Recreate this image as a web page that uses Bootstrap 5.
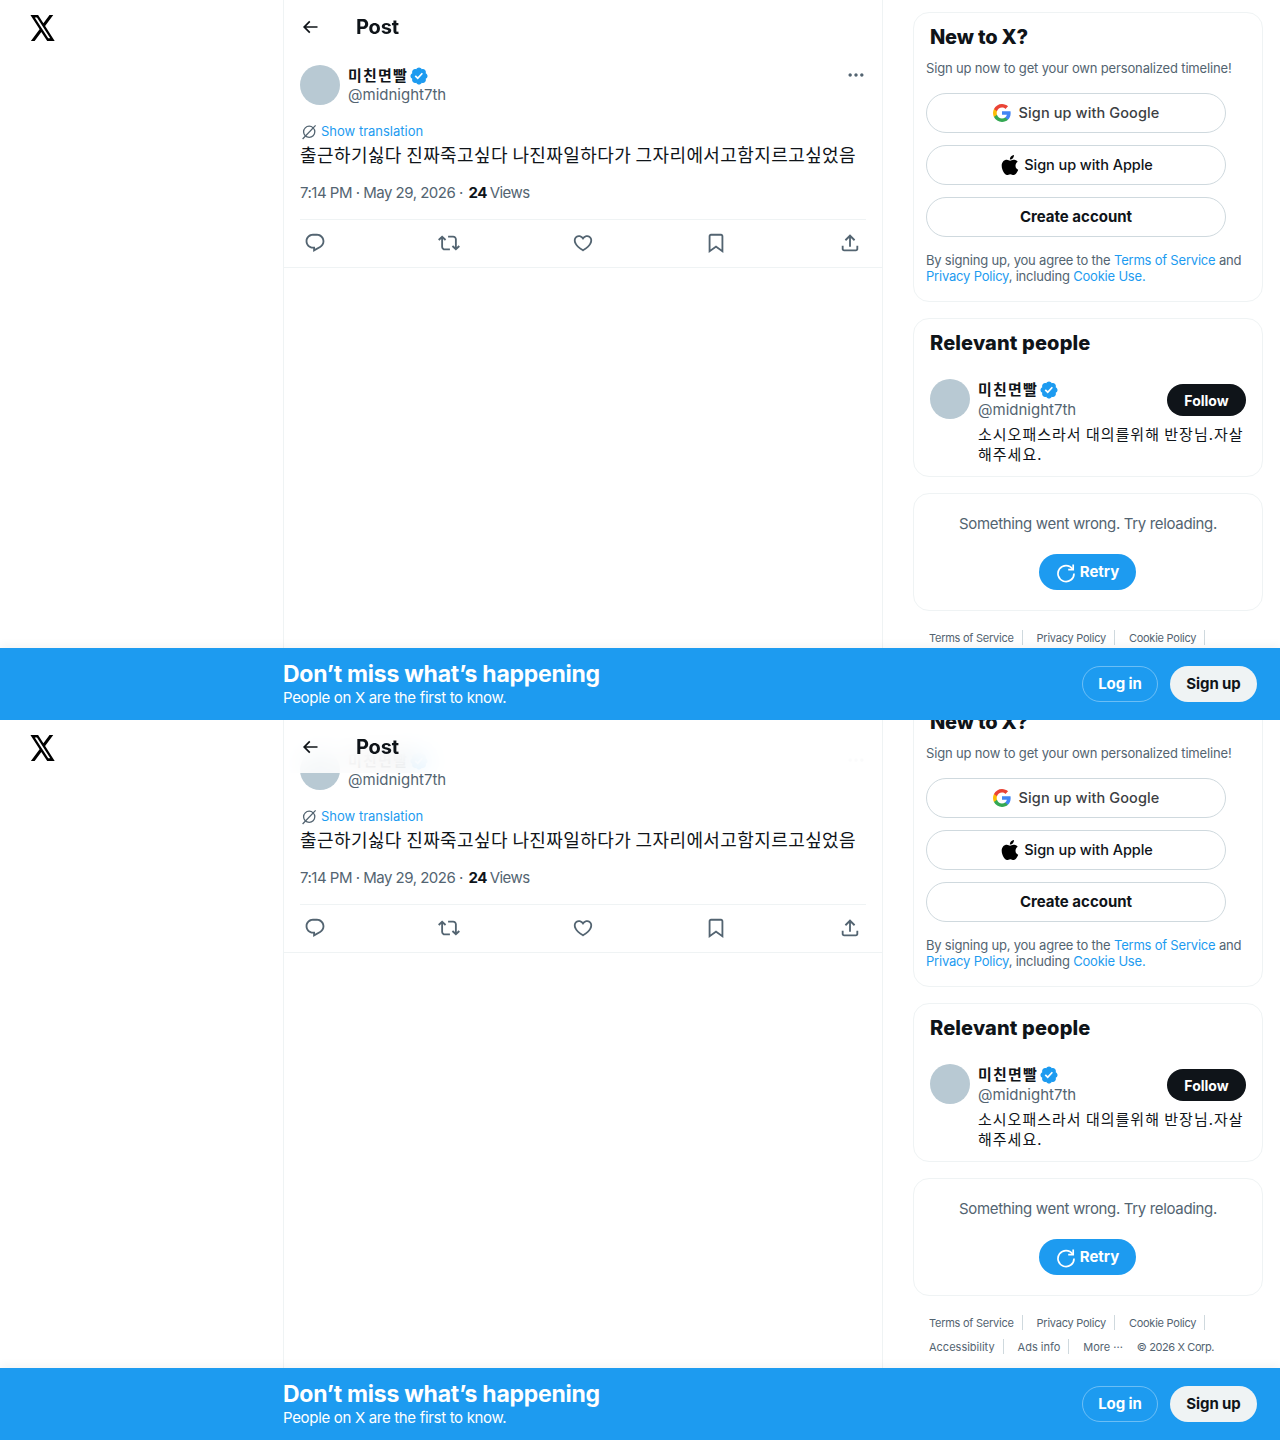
<!DOCTYPE html>
<html lang="en">
<head>
    <meta charset="UTF-8">
    <meta name="viewport" content="width=device-width, initial-scale=1.0">
    <link href="https://cdn.jsdelivr.net/npm/bootstrap@5.3.0/dist/css/bootstrap.min.css" rel="stylesheet">
    <title>Post / X</title>
    <style>
        body { font-family: Inter, "Noto Sans CJK KR", sans-serif; color: #0f1419; background: #fff; }
        .ko { font-family: "Noto Sans CJK KR", sans-serif; }
        .shot { height: 720px; }
        .left-rail { width: 283px; flex: none; padding: 15px 0 0 28.5px; }
        .left-rail svg { width: 27px; height: 32px; margin-top: -3px; display: block; }
        .center-col { width: 600px; flex: none; border-left: 1px solid #eff3f4; border-right: 1px solid #eff3f4; }
        .post-head { top: 0; left: 0; right: 0; height: 53px; padding-left: 16px; background: rgba(255,255,255,.85); backdrop-filter: blur(12px); z-index: 2; }
        .post-head h2 { font-size: 20px; font-weight: 700; letter-spacing: -.2px; margin: 0 0 0 36px; }
        .post-head svg { width: 20px; height: 20px; fill: #0f1419; }
        .post-wrap { padding-top: 53px; }
        .scrolled { margin-top: -35px; }
        .post-body { padding: 12px 16px 0; border-bottom: 1px solid #eff3f4; height: 215px; }
        .post-body .handle { margin-top: -1px; }
        .avatar-dot { width: 40px; height: 40px; border-radius: 50%; background: #b8c9d3; flex: none; }
        .user-name { font-size: 15px; font-weight: 700; line-height: 20px; letter-spacing: 1.2px; }
        .user-name svg { width: 20px; height: 20px; fill: #1d9bf0; vertical-align: -5px; margin-left: 1px; }
        .handle { font-size: 15px; line-height: 20px; color: #536471; }
        .more-dots { width: 20px; height: 20px; fill: #536471; margin: 0 0 0 auto; }
        .translate-row { margin-top: 17px; height: 20px; font-size: 13px; color: #1d9bf0; }
        .translate-row svg { width: 16px; height: 16px; margin-left: 1px; margin-right: 4px; }
        .post-text { font-size: 18px; line-height: 24px; margin-top: 0; white-space: nowrap; letter-spacing: .4px; }
        .post-meta { font-size: 15px; line-height: 20px; color: #536471; margin-top: 17px; letter-spacing: -.5px; }
        .post-meta b { color: #0f1419; font-weight: 700; margin-left: 2px; margin-right: -1px; }
        .action-row { margin-top: 16px; border-top: 1px solid #eff3f4; height: 47px; }
        .action-row span { width: 32px; display: flex; justify-content: center; }
        .action-row span:first-child { margin-left: -1px; }
        .action-row svg { width: 22px; height: 22px; fill: #536471; }
        .side-col { width: 350px; flex: none; margin-left: 30px; padding-top: 12px; }
        .side-box { border: 1px solid #eff3f4; border-radius: 16px; margin-bottom: 16px; }
        .side-box h3 { font-size: 20px; font-weight: 800; line-height: 24px; margin: 0; letter-spacing: -.2px; }
        .signup-box { height: 290px; padding: 12px; }
        .signup-box h3 { padding-left: 4px; }
        .signup-note { font-size: 13px; line-height: 16px; color: #536471; margin: 11px 0 17px; white-space: nowrap; letter-spacing: -.16px; }
        .signup-btn { width: 300px; height: 40px; border: 1px solid #cfd9de; font-size: 14.5px; font-weight: 500; color: #0f1419; margin-bottom: 12px; padding: 0; }
        .signup-btn svg { width: 18px; height: 18px; }
        .google-btn { letter-spacing: .1px; color: #3c4043; }
        .apple-btn { gap: 3px; letter-spacing: -.07px; }
        .signup-btn.apple-btn svg { width: 22px; height: 22px; }
        .signup-btn.bold-btn { font-size: 15px; font-weight: 700; }
        .fine-print { font-size: 13px; line-height: 16px; color: #536471; margin-top: 3px; letter-spacing: -.2px; }
        .fine-print a, .foot-links a { text-decoration: none; }
        .fine-print a { color: #1d9bf0; }
        .people-box { height: 159px; padding: 12px 16px; }
        .side-box.people-box h3 { letter-spacing: .13px; }
        .people-row { margin-top: 24px; }
        .person-text { margin-left: 8px; flex: 1; min-width: 0; }
        .follow-btn { height: 32px; width: 79px; background: #0f1419; color: #fff; font-size: 14px; font-weight: 700; padding: 0; border: 0; margin-top: 5px; }
        .bio { font-size: 15px; line-height: 20px; margin-top: 4px; letter-spacing: 1px; }
        .wrong-box { height: 118px; padding-top: 20px; text-align: center; }
        .wrong-box p { font-size: 15px; line-height: 20px; color: #536471; margin: 0 0 20px; letter-spacing: -.34px; }
        .retry-btn { height: 36px; width: 97px; background: #1d9bf0; color: #fff; font-size: 15px; font-weight: 700; border: 0; padding: 0; margin-left: -1px; }
        .retry-btn svg { width: 20px; height: 20px; margin-right: 4px; }
        .foot-links { font-size: 11px; line-height: 16px; color: #536471; padding: 3px 16px 0; }
        .foot-links div { margin-bottom: 8px; display: flex; height: 16px; letter-spacing: -.25px; }
        .foot-links div + div { letter-spacing: 0; }
        .foot-links span { margin-right: 14px; padding-right: 8px; border-right: 1px solid #cfd9de; height: 15px; line-height: 16px; }
        .foot-links span.no-bar { border: 0; padding-right: 0; }
        .foot-links span.copy-note { letter-spacing: -.4px; }
        .login-bar { left: 0; right: 0; bottom: 0; height: 72px; background: #1d9bf0; color: #fff; padding: 0 23px 0 283px; z-index: 3; box-shadow: 0 -4px 8px rgba(0,0,0,.04); }
        .login-bar h4 { font-size: 23px; font-weight: 700; line-height: 26px; margin: 0 0 2px; letter-spacing: -.25px; }
        .login-bar p { font-size: 15px; line-height: 18px; margin: 0; letter-spacing: -.32px; }
        .bar-btn { height: 36px; font-size: 15px; font-weight: 700; padding: 0; letter-spacing: -.1px; }
        .bar-login { width: 76px; border: 1px solid rgba(255,255,255,.35); color: #fff; margin-right: 12px; }
        .bar-signup { width: 87px; border: 0; background: #eff3f4; color: #0f1419; }
    </style>
</head>
<body>
    <svg width="0" height="0" class="position-absolute">
        <symbol id="i-x" viewBox="0 0 24 24" preserveAspectRatio="none"><path d="M18.244 2.25h3.308l-7.227 8.26 8.502 11.24H16.17l-5.214-6.817L4.99 21.75H1.68l7.73-8.835L1.254 2.25H8.08l4.713 6.231zm-1.161 17.52h1.833L7.084 4.126H5.117z"/></symbol>
        <symbol id="i-back" viewBox="0 0 24 24"><path d="M7.414 13l5.043 5.04-1.414 1.42L3.586 12l7.457-7.46 1.414 1.42L7.414 11H21v2H7.414z"/></symbol>
        <symbol id="i-badge" viewBox="0 0 24 24"><path d="M22.25 12c0-1.43-.88-2.67-2.19-3.34.46-1.39.2-2.9-.81-3.91s-2.52-1.27-3.91-.81c-.66-1.31-1.91-2.19-3.34-2.19s-2.67.88-3.33 2.19c-1.4-.46-2.91-.2-3.92.81s-1.26 2.52-.8 3.91c-1.31.67-2.2 1.91-2.2 3.34s.89 2.67 2.2 3.34c-.46 1.39-.21 2.9.8 3.91s2.52 1.26 3.91.81c.67 1.31 1.91 2.19 3.34 2.19s2.68-.88 3.34-2.19c1.39.45 2.9.2 3.91-.81s1.27-2.52.81-3.91c1.31-.67 2.19-1.91 2.19-3.34zm-11.71 4.2L6.8 12.46l1.41-1.42 2.26 2.26 4.8-5.23 1.47 1.36-6.2 6.77z"/></symbol>
        <symbol id="i-more" viewBox="0 0 24 24"><path d="M3 12c0-1.1.9-2 2-2s2 .9 2 2-.9 2-2 2-2-.9-2-2zm9 2c1.1 0 2-.9 2-2s-.9-2-2-2-2 .9-2 2 .9 2 2 2zm7 0c1.1 0 2-.9 2-2s-.9-2-2-2-2 .9-2 2 .9 2 2 2z"/></symbol>
        <symbol id="i-translate" viewBox="0 0 16 16"><circle cx="8.2" cy="7.8" r="5.6" fill="none" stroke="#536471" stroke-width="1.3"/><path d="M1.6 15 14.6 1.4" fill="none" stroke="#536471" stroke-width="1.3"/></symbol>
        <symbol id="i-reply" viewBox="0 0 24 24"><path d="M1.751 10c0-4.42 3.584-8 8.005-8h4.366c4.49 0 8.129 3.64 8.129 8.13 0 2.96-1.607 5.68-4.196 7.11l-8.054 4.46v-3.69h-.067c-4.49.1-8.183-3.51-8.183-8.01zm8.005-6c-3.317 0-6.005 2.69-6.005 6 0 3.37 2.77 6.08 6.138 6.01l.351-.01h1.761v2.3l5.087-2.81c1.951-1.08 3.163-3.13 3.163-5.36 0-3.39-2.744-6.13-6.129-6.13H9.756z"/></symbol>
        <symbol id="i-repost" viewBox="0 0 24 24"><path d="M4.5 3.88l4.432 4.14-1.364 1.46L5.5 7.55V16c0 1.1.896 2 2 2H13v2H7.5c-2.209 0-4-1.79-4-4V7.55L1.432 9.48.068 8.02 4.5 3.88zM16.5 6H11V4h5.5c2.209 0 4 1.79 4 4v8.45l2.068-1.93 1.364 1.46-4.432 4.14-4.432-4.14 1.364-1.46 2.068 1.93V8c0-1.1-.896-2-2-2z"/></symbol>
        <symbol id="i-like" viewBox="0 0 24 24"><path d="M16.697 5.5c-1.222-.06-2.679.51-3.89 2.16l-.805 1.09-.806-1.09C9.984 6.01 8.526 5.44 7.304 5.5c-1.243.07-2.349.78-2.91 1.91-.552 1.12-.633 2.78.479 4.82 1.074 1.97 3.257 4.27 7.129 6.61 3.87-2.34 6.052-4.64 7.126-6.61 1.111-2.04 1.03-3.7.477-4.82-.561-1.13-1.666-1.84-2.908-1.91zm4.187 7.69c-1.351 2.48-4.001 5.12-8.379 7.67l-.503.3-.504-.3c-4.379-2.55-7.029-5.19-8.382-7.67-1.36-2.5-1.41-4.86-.514-6.67.887-1.79 2.647-2.91 4.601-3.01 1.651-.09 3.368.56 4.798 2.01 1.429-1.45 3.146-2.1 4.796-2.01 1.954.1 3.714 1.22 4.601 3.01.896 1.81.846 4.17-.514 6.67z"/></symbol>
        <symbol id="i-bookmark" viewBox="0 0 24 24"><path d="M4 4.5C4 3.12 5.119 2 6.5 2h11C18.881 2 20 3.12 20 4.5v18.44l-8-5.71-8 5.71V4.5zM6.5 4c-.276 0-.5.22-.5.5v14.56l6-4.29 6 4.29V4.5c0-.28-.224-.5-.5-.5h-11z"/></symbol>
        <symbol id="i-share" viewBox="0 0 24 24"><path d="M12 2.59l5.7 5.7-1.41 1.42L13 6.41V16h-2V6.41l-3.3 3.3-1.41-1.42L12 2.59zM21 15l-.02 3.51c0 1.38-1.12 2.49-2.5 2.49H5.5C4.11 21 3 19.88 3 18.5V15h2v3.5c0 .28.22.5.5.5h12.98c.28 0 .5-.22.5-.5L19 15h2z"/></symbol>
        <symbol id="i-google" viewBox="0 0 18 18"><path fill="#4285F4" d="M17.64 9.2c0-.637-.057-1.251-.164-1.84H9v3.481h4.844c-.209 1.125-.843 2.078-1.796 2.717v2.258h2.908c1.702-1.567 2.684-3.874 2.684-6.615z"/><path fill="#34A853" d="M9 18c2.43 0 4.467-.806 5.956-2.184l-2.908-2.258c-.806.54-1.837.86-3.048.86-2.344 0-4.328-1.584-5.036-3.711H.957v2.332C2.438 15.983 5.482 18 9 18z"/><path fill="#FBBC05" d="M3.964 10.707c-.18-.54-.282-1.117-.282-1.707s.102-1.167.282-1.707V4.961H.957C.347 6.175 0 7.55 0 9s.348 2.825.957 4.039l3.007-2.332z"/><path fill="#EA4335" d="M9 3.58c1.321 0 2.508.454 3.44 1.345l2.582-2.58C13.463.891 11.426 0 9 0 5.482 0 2.438 2.017.957 4.961L3.964 7.293C4.672 5.166 6.656 3.58 9 3.58z"/></symbol>
        <symbol id="i-apple" viewBox="0 0 24 24"><path d="M16.365 1.43c0 1.14-.493 2.27-1.177 3.08-.744.9-1.99 1.57-2.987 1.57-.12 0-.23-.02-.3-.03-.01-.06-.04-.22-.04-.39 0-1.15.572-2.27 1.206-2.98.804-.94 2.142-1.64 3.248-1.68.03.13.05.28.05.43zm4.565 15.71c-.03.07-.463 1.58-1.518 3.12-.945 1.34-1.94 2.71-3.43 2.71-1.517 0-1.9-.88-3.63-.88-1.698 0-2.302.91-3.67.91-1.377 0-2.332-1.26-3.428-2.8-1.287-1.82-2.323-4.63-2.323-7.28 0-4.28 2.797-6.55 5.552-6.55 1.448 0 2.675.95 3.6.95.865 0 2.222-1.01 3.902-1.01.613 0 2.886.06 4.374 2.19-.13.09-2.383 1.37-2.383 4.19 0 3.26 2.854 4.42 2.955 4.45z"/></symbol>
        <symbol id="i-retry" viewBox="0 0 20 20"><path d="M16.6 6.1A8 8 0 1 0 18 10.5" fill="none" stroke="#fff" stroke-width="1.7"/><path d="M17.2 1.6v5h-5" fill="none" stroke="#fff" stroke-width="1.7"/></symbol>
    </svg>

    <!-- first capture, top of the page -->
    <section class="shot d-flex position-relative overflow-hidden">
        <div class="left-rail"><svg><use href="#i-x"/></svg></div>
        <main class="center-col position-relative">
            <div class="post-head position-absolute d-flex align-items-center">
                <svg><use href="#i-back"/></svg><h2>Post</h2>
            </div>
            <div class="post-wrap">
                <div class="post-body">
                    <div class="d-flex">
                        <div class="avatar-dot me-2"></div>
                        <div class="flex-grow-1">
                            <div class="user-name ko">미친면빨<svg><use href="#i-badge"/></svg></div>
                            <div class="handle">@midnight7th</div>
                        </div>
                        <svg class="more-dots"><use href="#i-more"/></svg>
                    </div>
                    <div class="translate-row d-flex align-items-center"><svg><use href="#i-translate"/></svg>Show translation</div>
                    <div class="post-text ko">출근하기싫다 진짜죽고싶다 나진짜일하다가 그자리에서고함지르고싶었음</div>
                    <div class="post-meta">7:14 PM · May 29, 2026 · <b>24</b> Views</div>
                    <div class="action-row d-flex justify-content-between align-items-center">
                        <span><svg><use href="#i-reply"/></svg></span>
                        <span><svg><use href="#i-repost"/></svg></span>
                        <span><svg><use href="#i-like"/></svg></span>
                        <span><svg><use href="#i-bookmark"/></svg></span>
                        <span><svg><use href="#i-share"/></svg></span>
                    </div>
                </div>
            </div>
        </main>
        <aside class="side-col">
            <div class="side-box signup-box">
                <h3>New to X?</h3>
                <p class="signup-note">Sign up now to get your own personalized timeline!</p>
                <button class="btn signup-btn google-btn rounded-pill d-flex align-items-center justify-content-center gap-2"><svg><use href="#i-google"/></svg>Sign up with Google</button>
                <button class="btn signup-btn apple-btn rounded-pill d-flex align-items-center justify-content-center"><svg><use href="#i-apple"/></svg>Sign up with Apple</button>
                <button class="btn signup-btn bold-btn rounded-pill">Create account</button>
                <p class="fine-print mb-0">By signing up, you agree to the <a href="#">Terms of Service</a> and <a href="#">Privacy Policy</a>, including <a href="#">Cookie Use.</a></p>
            </div>
            <div class="side-box people-box">
                <h3>Relevant people</h3>
                <div class="people-row d-flex">
                    <div class="avatar-dot"></div>
                    <div class="person-text">
                        <div class="d-flex justify-content-between">
                            <div>
                                <div class="user-name ko">미친면빨<svg><use href="#i-badge"/></svg></div>
                                <div class="handle">@midnight7th</div>
                            </div>
                            <button class="btn follow-btn rounded-pill">Follow</button>
                        </div>
                        <div class="bio ko">소시오패스라서 대의를위해 반장님.자살해주세요.</div>
                    </div>
                </div>
            </div>
            <div class="side-box wrong-box">
                <p>Something went wrong. Try reloading.</p>
                <button class="btn retry-btn rounded-pill"><svg><use href="#i-retry"/></svg>Retry</button>
            </div>
            <div class="foot-links">
                <div><span>Terms of Service</span><span>Privacy Policy</span><span>Cookie Policy</span></div>
                <div><span>Accessibility</span><span>Ads info</span><span class="no-bar">More ···</span><span class="no-bar copy-note">© 2026 X Corp.</span></div>
            </div>
        </aside>
        <div class="login-bar position-absolute d-flex align-items-center">
            <div class="flex-grow-1">
                <h4>Don’t miss what’s happening</h4>
                <p>People on X are the first to know.</p>
            </div>
            <button class="btn bar-btn bar-login rounded-pill">Log in</button>
            <button class="btn bar-btn bar-signup rounded-pill">Sign up</button>
        </div>
    </section>

    <!-- second capture, scrolled down 35px with the header stuck on top -->
    <section class="shot d-flex position-relative overflow-hidden">
        <div class="left-rail"><svg><use href="#i-x"/></svg></div>
        <main class="center-col position-relative">
            <div class="post-head position-absolute d-flex align-items-center">
                <svg><use href="#i-back"/></svg><h2>Post</h2>
            </div>
            <div class="post-wrap scrolled">
                <div class="post-body">
                    <div class="d-flex">
                        <div class="avatar-dot me-2"></div>
                        <div class="flex-grow-1">
                            <div class="user-name ko">미친면빨<svg><use href="#i-badge"/></svg></div>
                            <div class="handle">@midnight7th</div>
                        </div>
                        <svg class="more-dots"><use href="#i-more"/></svg>
                    </div>
                    <div class="translate-row d-flex align-items-center"><svg><use href="#i-translate"/></svg>Show translation</div>
                    <div class="post-text ko">출근하기싫다 진짜죽고싶다 나진짜일하다가 그자리에서고함지르고싶었음</div>
                    <div class="post-meta">7:14 PM · May 29, 2026 · <b>24</b> Views</div>
                    <div class="action-row d-flex justify-content-between align-items-center">
                        <span><svg><use href="#i-reply"/></svg></span>
                        <span><svg><use href="#i-repost"/></svg></span>
                        <span><svg><use href="#i-like"/></svg></span>
                        <span><svg><use href="#i-bookmark"/></svg></span>
                        <span><svg><use href="#i-share"/></svg></span>
                    </div>
                </div>
            </div>
        </main>
        <aside class="side-col scrolled">
            <div class="side-box signup-box">
                <h3>New to X?</h3>
                <p class="signup-note">Sign up now to get your own personalized timeline!</p>
                <button class="btn signup-btn google-btn rounded-pill d-flex align-items-center justify-content-center gap-2"><svg><use href="#i-google"/></svg>Sign up with Google</button>
                <button class="btn signup-btn apple-btn rounded-pill d-flex align-items-center justify-content-center"><svg><use href="#i-apple"/></svg>Sign up with Apple</button>
                <button class="btn signup-btn bold-btn rounded-pill">Create account</button>
                <p class="fine-print mb-0">By signing up, you agree to the <a href="#">Terms of Service</a> and <a href="#">Privacy Policy</a>, including <a href="#">Cookie Use.</a></p>
            </div>
            <div class="side-box people-box">
                <h3>Relevant people</h3>
                <div class="people-row d-flex">
                    <div class="avatar-dot"></div>
                    <div class="person-text">
                        <div class="d-flex justify-content-between">
                            <div>
                                <div class="user-name ko">미친면빨<svg><use href="#i-badge"/></svg></div>
                                <div class="handle">@midnight7th</div>
                            </div>
                            <button class="btn follow-btn rounded-pill">Follow</button>
                        </div>
                        <div class="bio ko">소시오패스라서 대의를위해 반장님.자살해주세요.</div>
                    </div>
                </div>
            </div>
            <div class="side-box wrong-box">
                <p>Something went wrong. Try reloading.</p>
                <button class="btn retry-btn rounded-pill"><svg><use href="#i-retry"/></svg>Retry</button>
            </div>
            <div class="foot-links">
                <div><span>Terms of Service</span><span>Privacy Policy</span><span>Cookie Policy</span></div>
                <div><span>Accessibility</span><span>Ads info</span><span class="no-bar">More ···</span><span class="no-bar copy-note">© 2026 X Corp.</span></div>
            </div>
        </aside>
        <div class="login-bar position-absolute d-flex align-items-center">
            <div class="flex-grow-1">
                <h4>Don’t miss what’s happening</h4>
                <p>People on X are the first to know.</p>
            </div>
            <button class="btn bar-btn bar-login rounded-pill">Log in</button>
            <button class="btn bar-btn bar-signup rounded-pill">Sign up</button>
        </div>
    </section>
    <script src="https://cdn.jsdelivr.net/npm/bootstrap@5.3.0/dist/js/bootstrap.bundle.min.js"></script>
</body>
</html>
